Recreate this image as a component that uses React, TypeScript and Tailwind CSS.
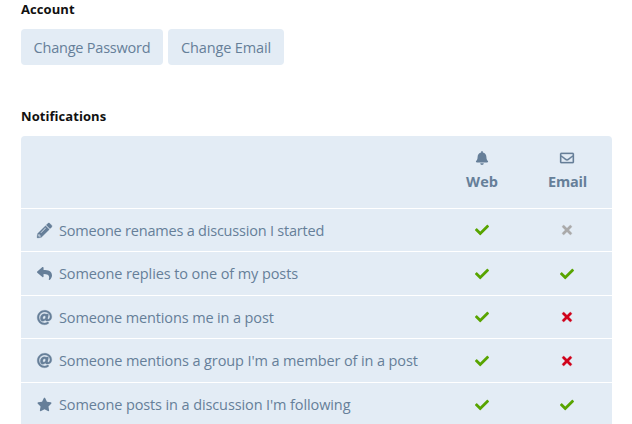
import React from 'react';
import { FaBell, FaRegEnvelope, FaPencilAlt, FaReply, FaAt, FaStar, FaCheck, FaTimes } from 'react-icons/fa';

type State = 'on' | 'off' | 'disabled';
type Row = { icon: React.ReactNode; label: string; tracking: string; height: string; web: State; email: State };

const rows: Row[] = [
  { icon: <FaPencilAlt className="overflow-visible stroke-current stroke-[10]" />, label: 'Someone renames a discussion I started', tracking: 'pt-px tracking-[-0.21px]', height: 'h-[43px]', web: 'on', email: 'disabled' },
  { icon: <FaReply />, label: 'Someone replies to one of my posts', tracking: 'tracking-[-0.1px]', height: 'h-[44px]', web: 'on', email: 'on' },
  { icon: <FaAt className="overflow-visible stroke-current stroke-[10]" />, label: 'Someone mentions me in a post', tracking: 'pt-px tracking-[-0.13px]', height: 'h-[43px]', web: 'on', email: 'off' },
  { icon: <FaAt className="overflow-visible stroke-current stroke-[10]" />, label: "Someone mentions a group I'm a member of in a post", tracking: 'tracking-[-0.11px]', height: 'h-[44px]', web: 'on', email: 'off' },
  { icon: <FaStar />, label: "Someone posts in a discussion I'm following", tracking: 'tracking-[-0.11px]', height: 'h-[44px]', web: 'on', email: 'on' },
];

function Mark({ state }: { state: State }) {
  if (state === 'on') return <FaCheck className="size-[14px] text-[#58a400]" />;
  return <FaTimes className={`h-[14px] w-[10px] overflow-visible stroke-current stroke-[10] ${state === 'off' ? 'text-[#d0021b]' : 'text-[#aaaaaa]'}`} />;
}

function Button({ children, className }: { children: React.ReactNode; className: string }) {
  return (
    <button className={`flex h-9 items-center justify-center rounded bg-[#e3ecf5] pt-px text-[14.5px] whitespace-nowrap text-[#667f99] ${className}`}>
      {children}
    </button>
  );
}

export default function App() {
  return (
    <main className="h-[424px] overflow-hidden bg-white pl-[21px] font-['Open_Sans','Noto_Sans',sans-serif] text-[#667f99]">
      <h2 className="h-[29px] text-[13px] leading-[18px] font-bold tracking-[0.08px] text-[#111111]">Account</h2>
      <div className="flex gap-[5px]">
        <Button className="w-[142px] tracking-[-0.22px]">Change Password</Button>
        <Button className="w-[116px] tracking-[-0.12px]">Change Email</Button>
      </div>
      <h2 className="mt-[42px] h-[29px] text-[13px] leading-[18px] font-bold tracking-[0.06px] text-[#111111]">Notifications</h2>
      <section className="w-[591px] overflow-hidden rounded-t bg-[#e3ecf5]">
        <header className="grid h-[73px] grid-cols-[1fr_82px_89px] border-b border-white text-center text-[14.5px] leading-5 font-bold">
          <div />
          <div className="flex flex-col items-center pt-[15px]">
            <FaBell className="size-[14px]" />
            <span className="mt-[7px]">Web</span>
          </div>
          <div className="flex flex-col items-center pt-[15px]">
            <FaRegEnvelope className="mr-px size-[14px] overflow-visible stroke-current stroke-[10]" />
            <span className="mt-[7px] tracking-[-0.2px]">Email</span>
          </div>
        </header>
        {rows.map((row) => (
          <div key={row.label} className={`grid grid-cols-[1fr_82px_89px] items-center border-b border-white ${row.height}`}>
            <div className="flex items-center pl-4 text-[14.5px]">
              <span className="mr-[7px] text-[15px]">{row.icon}</span>
              <span className={`whitespace-nowrap ${row.tracking}`}>{row.label}</span>
            </div>
            <div className="flex justify-center"><Mark state={row.web} /></div>
            <div className="flex justify-center pr-px"><Mark state={row.email} /></div>
          </div>
        ))}
      </section>
    </main>
  );
}
